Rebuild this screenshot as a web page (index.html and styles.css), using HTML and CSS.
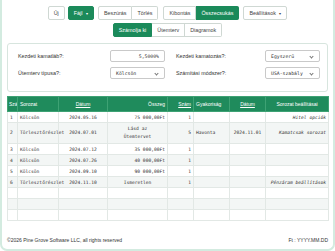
FILE: index.html
```html
<!DOCTYPE html>
<html>
<head>
<meta charset="utf-8">
<link rel="stylesheet" href="styles.css">
</head>
<body>
<div class="page">
  <div class="toolbar">
    <button class="btn">Új</button>
    <button class="btn green">Fájl <span class="caret">▾</span></button>
    <div class="group">
      <button class="btn">Beszúrás</button><button class="btn">Törlés</button>
    </div>
    <div class="group">
      <button class="btn">Kibontás</button><button class="btn green">Összecsukás</button>
    </div>
    <button class="btn">Beállítások <span class="caret">▾</span></button>
  </div>
  <div class="tabs">
    <div class="group">
      <button class="btn green">Számolja ki</button><button class="btn">Ütemterv</button><button class="btn">Diagramok</button>
    </div>
  </div>

  <div class="card">
    <div class="lbl">Kezdeti kamatláb?:</div>
    <div class="ctl input">5,5000%</div>
    <div class="sp"></div>
    <div class="lbl">Kezdeti kamatozás?:</div>
    <div class="ctl select">Egyszerű<span class="chev"></span></div>

    <div class="lbl">Ütemterv típusa?:</div>
    <div class="ctl select">Kölcsön<span class="chev"></span></div>
    <div class="sp"></div>
    <div class="lbl">Számítási módszer?:</div>
    <div class="ctl select">USA-szabály<span class="chev"></span></div>
  </div>

  <table class="grid">
    <colgroup>
      <col style="width:10px"><col style="width:41px"><col style="width:49px"><col style="width:60px"><col style="width:26px"><col style="width:36px"><col style="width:36px"><col style="width:63px">
    </colgroup>
    <thead>
      <tr>
        <th class="l clip">Szám</th>
        <th class="l">Sorozat</th>
        <th><u>Dátum</u></th>
        <th class="r">Összeg</th>
        <th class="r"><u>Szám</u></th>
        <th class="l">Gyakoriság</th>
        <th><u>Dátum</u></th>
        <th>Sorozat beállításai</th>
      </tr>
    </thead>
    <tbody>
      <tr><td>1</td><td>Kölcsön</td><td class="c">2024.05.16</td><td class="r">75 000,00Ft</td><td class="r">1</td><td></td><td></td><td class="r i">Hitel opciók</td></tr>
      <tr class="two"><td>2</td><td class="nowrap">Törlesztőrészlet</td><td class="c">2024.07.01</td><td class="c">Lásd az<br>Ütemtervet</td><td class="r">5</td><td>Havonta</td><td class="c">2024.11.01</td><td class="r i">Kamatcsak sorozat</td></tr>
      <tr><td>3</td><td>Kölcsön</td><td class="c">2024.07.12</td><td class="r">35 000,00Ft</td><td class="r">1</td><td></td><td></td><td></td></tr>
      <tr><td>4</td><td>Kölcsön</td><td class="c">2024.07.26</td><td class="r">40 000,00Ft</td><td class="r">1</td><td></td><td></td><td></td></tr>
      <tr><td>5</td><td>Kölcsön</td><td class="c">2024.09.10</td><td class="r">90 000,00Ft</td><td class="r">1</td><td></td><td></td><td></td></tr>
      <tr><td>6</td><td class="nowrap">Törlesztőrészlet</td><td class="c">2024.11.10</td><td class="c">Ismeretlen</td><td class="r">1</td><td></td><td></td><td class="r i">Pénzáram beállítások</td></tr>
      <tr><td></td><td></td><td></td><td></td><td></td><td></td><td></td><td></td></tr>
      <tr><td></td><td></td><td></td><td></td><td></td><td></td><td></td><td></td></tr>
      <tr><td></td><td></td><td></td><td></td><td></td><td></td><td></td><td></td></tr>
    </tbody>
  </table>

  <div class="footer">
    <span>©2026 Pine Grove Software LLC, all rights reserved</span>
    <span>Ft : YYYY.MM.DD</span>
  </div>
</div>
</body>
</html>
```
FILE: styles.css
```css
* { box-sizing: border-box; }
html, body { margin: 0; padding: 0; background: #fff; }
body { font-family: "Liberation Sans", Arial, sans-serif; color: #333; }
.page {
  width: 335px; height: 251px;
  border: 2px solid #d3ebe0; border-top: none;
  border-radius: 0 0 7px 7px;
  display: flex; flex-direction: column;
  overflow: hidden;
}
.toolbar { display: flex; justify-content: center; gap: 3px; margin-top: 6px; }
.toolbar .group { margin: 0 1px; }
.tabs { display: flex; justify-content: center; margin-top: 3px; }
.group { display: flex; }
.btn {
  font-family: "Liberation Sans", Arial, sans-serif;
  font-size: 5.4px; height: 14px; padding: 0 5px;
  border: 1px solid #cfd8d3; background: #fff; color: #444;
  border-radius: 2px; line-height: 12px;
}
.group .btn { border-radius: 0; }
.group .btn:first-child { border-radius: 2px 0 0 2px; }
.group .btn:last-child { border-radius: 0 2px 2px 0; }
.group .btn + .btn { border-left: none; }
.btn.green { background: #1b8a5a; border-color: #1b8a5a; color: #fff; }
.caret { font-size: 4px; margin-left: 2px; }

.card {
  margin: 6px 5px 0;
  border: 1px solid #d7e5de; border-radius: 3px;
  padding: 6px 9px 12px 10px;
  display: grid;
  grid-template-columns: 92px 55px 11px 89px 55px;
  row-gap: 5px; align-items: center;
}
.lbl { font-size: 5.4px; color: #333; }
.ctl {
  height: 12px; border: 1px solid #c9c9c9; border-radius: 2px;
  font-family: "DejaVu Sans Mono", monospace; font-size: 4.8px; color: #333;
  display: flex; align-items: center; padding: 0 5px;
  position: relative;
}
.input { justify-content: flex-end; }
.chev {
  position: absolute; right: 6px; top: 3.5px;
  width: 3px; height: 3px;
  border-right: 0.7px solid #777; border-bottom: 0.7px solid #777;
  transform: rotate(45deg);
}

.grid {
  margin: 4px 5px 0; width: 321px;
  border-collapse: collapse; table-layout: fixed;
  font-family: "DejaVu Sans Mono", monospace; font-size: 4.6px; color: #333;
}
.grid th {
  background: #1f8b5c; color: #fff; font-family: "Liberation Sans", Arial, sans-serif;
  font-weight: normal; font-size: 5px; height: 15px; padding: 0 2px;
  border: 1px solid #3ea274; text-align: center;
}
.grid th.clip { overflow: hidden; white-space: nowrap; text-overflow: clip; padding: 0 1px; }
.grid td {
  height: 11px; padding: 1px 2px; border: 1px solid #e2e8e5; vertical-align: middle;
  line-height: 7px;
}
.grid tr.two td { height: 21px; line-height: 8.5px; }
.grid tbody tr:nth-child(even) td { background: #f3f6f5; }
.grid .l { text-align: left; }
.grid .r { text-align: right; }
.grid .c { text-align: center; }
.grid .i { font-style: italic; }
.nowrap { white-space: nowrap; overflow: visible; }
.grid u { text-decoration: underline; }

.footer {
  margin-top: auto; margin-bottom: 6px;
  padding: 0 5px;
  display: flex; justify-content: space-between;
  font-size: 5px; color: #333;
}
```
